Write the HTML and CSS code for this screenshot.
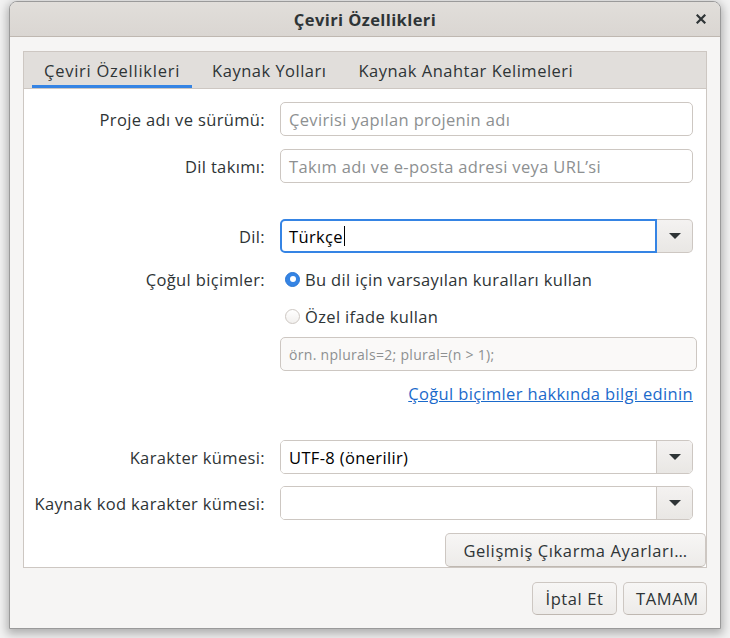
FILE: index.html
```html
<!DOCTYPE html>
<html lang="tr">
<head>
<meta charset="utf-8">
<title>Çeviri Özellikleri</title>
<link rel="stylesheet" href="styles.css">
</head>
<body>
<div class="window">
  <header class="titlebar">
    <span></span>
    <span class="title">Çeviri Özellikleri</span>
    <span class="close-wrap">
      <span class="close">
        <svg width="10" height="10" viewBox="0 0 10 10"><path d="M1.5 1.5 L8.5 8.5 M8.5 1.5 L1.5 8.5" stroke="#2e3436" stroke-width="2.2" stroke-linecap="square"/></svg>
      </span>
    </span>
  </header>
  <div class="content">
    <div class="notebook">
      <div class="tabs">
        <div class="tab active">Çeviri Özellikleri</div>
        <div class="tab">Kaynak Yolları</div>
        <div class="tab">Kaynak Anahtar Kelimeleri</div>
      </div>
      <div class="page">
        <div class="row r1">
          <span class="label">Proje adı ve sürümü:</span>
          <div class="entry"><span class="ph">Çevirisi yapılan projenin adı</span></div>
        </div>
        <div class="row r2">
          <span class="label">Dil takımı:</span>
          <div class="entry"><span class="ph">Takım adı ve e-posta adresi veya URL’si</span></div>
        </div>
        <div class="row r3">
          <span class="label">Dil:</span>
          <div class="combo-entry">
            <div class="entry focused"><span class="val">Türkçe</span><span class="caret"></span></div>
            <div class="drop"><span class="arrow"></span></div>
          </div>
        </div>
        <div class="row r4">
          <span class="label">Çoğul biçimler:</span>
          <div class="radio-line"><span class="radio checked"></span><span class="rtext">Bu dil için varsayılan kuralları kullan</span></div>
        </div>
        <div class="row r5">
          <span></span>
          <div class="radio-line"><span class="radio"></span><span class="rtext">Özel ifade kullan</span></div>
        </div>
        <div class="row r6">
          <span></span>
          <div class="entry disabled"><span class="dis">örn. nplurals=2; plural=(n &gt; 1);</span></div>
        </div>
        <div class="row r7">
          <span></span>
          <div class="link-line"><a class="link" href="#">Çoğul biçimler hakkında bilgi edinin</a></div>
        </div>
        <div class="row r8">
          <span class="label">Karakter kümesi:</span>
          <div class="combo">
            <div class="combo-main"><span class="val">UTF-8 (önerilir)</span></div>
            <div class="combo-btn"><span class="arrow"></span></div>
          </div>
        </div>
        <div class="row r9">
          <span class="label">Kaynak kod karakter kümesi:</span>
          <div class="combo">
            <div class="combo-main"></div>
            <div class="combo-btn"><span class="arrow"></span></div>
          </div>
        </div>
        <div class="adv-line">
          <button class="btn adv">Gelişmiş Çıkarma Ayarları…</button>
        </div>
      </div>
    </div>
    <div class="actions">
      <button class="btn act cancel">İptal Et</button>
      <button class="btn act ok">TAMAM</button>
    </div>
  </div>
</div>
</body>
</html>
```
FILE: styles.css
```css
* { box-sizing: border-box; }
html, body { margin: 0; padding: 0; }
body {
  background: #f2f2f2;
  font-family: "Open Sans", "Noto Sans", sans-serif;
  font-size: 16.5px;
  letter-spacing: 0.35px;
  color: #2e3436;
  width: 730px;
  height: 638px;
  overflow: hidden;
}
.window {
  margin: 1px 0 0 9px;
  width: 712px;
  height: 628px;
  border: 1px solid #9a9a9a;
  border-radius: 8px 8px 0 0;
  background: #f6f5f4;
  box-shadow: 0 3px 10px 2px rgba(0,0,0,0.28);
  display: flex;
  flex-direction: column;
}
.titlebar {
  height: 35px;
  flex: none;
  border-bottom: 1px solid #bfb8b1;
  border-radius: 7px 7px 0 0;
  background: linear-gradient(#e1deda, #dad6d2);
  display: grid;
  grid-template-columns: 1fr auto 1fr;
  align-items: center;
}
.title { font-weight: 700; font-size: 16.5px; letter-spacing: 0.4px; }
.close-wrap { display: flex; justify-content: flex-end; padding-right: 7px; }
.close { width: 24px; height: 24px; display: flex; align-items: center; justify-content: center; }
.content {
  flex: 1;
  padding: 14px 13px 13px 13px;
  display: flex;
  flex-direction: column;
}
.notebook {
  border: 1px solid #cdc7c2;
  display: flex;
  flex-direction: column;
  height: 517px;
}
.tabs {
  height: 37px;
  flex: none;
  background: #e1dedb;
  border-bottom: 1px solid #cdc7c2;
  display: flex;
  padding-left: 8px;
  gap: 8px;
}
.tab {
  padding: 0 12px;
  display: flex;
  align-items: center;
  height: 36px;
  color: #2e3436;
  letter-spacing: 0.5px;
}
.tab.active { box-shadow: inset 0 -3px 0 #3584e4; letter-spacing: 0.75px; }
.page {
  flex: 1;
  background: #fff;
  padding: 13px 13px 0 0;
  display: flex;
  flex-direction: column;
}
.row {
  display: grid;
  grid-template-columns: 241px 1fr;
  column-gap: 15px;
  align-items: center;
}
.label { text-align: right; }
.r1 { height: 34px; }
.r2 { height: 34px; margin-top: 13px; }
.r3 { height: 34px; margin-top: 36px; }
.r4 { height: 24px; margin-top: 14px; }
.r5 { height: 24px; margin-top: 13px; }
.r6 { height: 34px; margin-top: 9px; }
.r7 { height: 20px; margin-top: 11px; }
.r8 { height: 34px; margin-top: 38px; }
.r9 { height: 34px; margin-top: 12px; }
.entry {
  height: 34px;
  border: 1px solid #cdc7c2;
  border-radius: 5px;
  background: #fff;
  display: flex;
  align-items: center;
  padding-left: 8px;
}
.ph { color: #8d9091; }
.val { color: #000; }
.caret { width: 1px; height: 20px; background: #000; margin-left: 1px; }
.entry.disabled {
  background: #faf9f8;
  margin-right: -4px;
}
.dis { color: #8d9091; font-size: 14px; letter-spacing: 0.3px; }
.combo-entry { display: flex; height: 34px; }
.combo-entry .entry { flex: 1; border-radius: 5px 0 0 5px; }
.entry.focused { border: 2px solid #3584e4; padding-left: 7px; }
.drop {
  width: 36px;
  border: 1px solid #cdc7c2;
  border-left: none;
  border-radius: 0 5px 5px 0;
  background: linear-gradient(#f4f2f1, #e9e7e4);
  display: flex; align-items: center; justify-content: center;
}
.arrow {
  width: 0; height: 0;
  border-left: 6px solid transparent;
  border-right: 6px solid transparent;
  border-top: 6px solid #2e3436;
}
.radio-line { display: flex; align-items: center; gap: 5px; padding-left: 5px; }
.radio {
  width: 15px; height: 15px; border-radius: 50%;
  border: 1px solid #cdc7c2;
  background: linear-gradient(#fff, #f2f0ee);
  flex: none;
  display: flex; align-items: center; justify-content: center;
}
.radio.checked { background: #3584e4; border-color: #2a76d4; }
.radio.checked::after { content: ""; width: 6px; height: 6px; border-radius: 50%; background: #fff; }
.link-line { display: flex; justify-content: flex-end; }
.link { color: #1b6acb; text-decoration: underline; }
.combo {
  height: 34px;
  display: flex;
  border: 1px solid #cdc7c2;
  border-radius: 5px;
  overflow: hidden;
}
.combo-main { flex: 1; background: #fff; display: flex; align-items: center; padding-left: 8px; }
.combo-btn {
  width: 36px;
  border-left: 1px solid #cdc7c2;
  background: linear-gradient(#f4f2f1, #e9e7e4);
  display: flex; align-items: center; justify-content: center;
}
.btn {
  font-family: inherit;
  font-size: 16.5px;
  letter-spacing: 0.6px;
  color: #2e3436;
  border: 1px solid #cdc7c2;
  border-bottom-color: #bfb8b1;
  border-radius: 5px;
  background: linear-gradient(#f7f6f5, #edebe9);
  padding: 0 12px;
}
.adv-line { display: flex; justify-content: flex-end; margin-top: 13px; margin-right: -13px; }
.adv { height: 34px; width: 261px; }
.actions { display: flex; justify-content: flex-end; gap: 6px; margin-top: 14px; }
.act { height: 33px; }
.cancel { width: 85px; }
.ok { width: 84px; }
```
